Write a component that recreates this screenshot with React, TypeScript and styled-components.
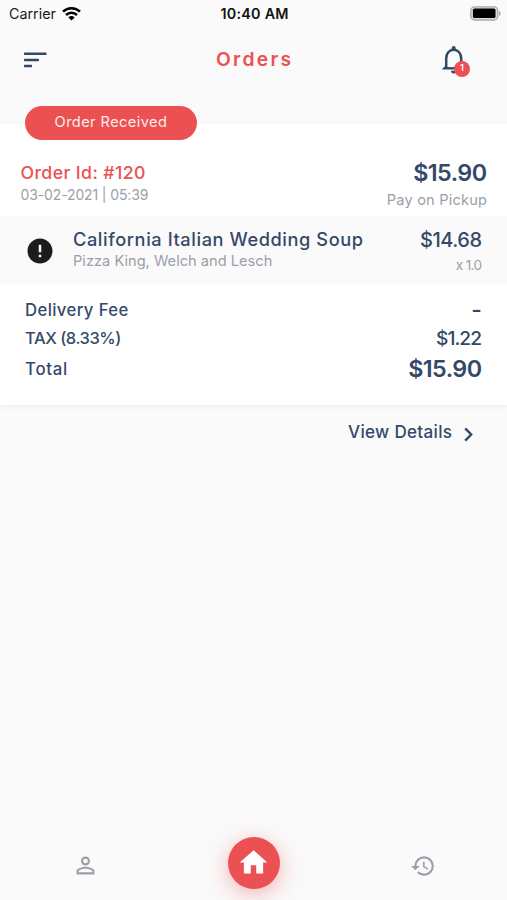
import React from "react";
import styled, { createGlobalStyle } from "styled-components";
import { MdHome, MdHistory, MdPersonOutline, MdError } from "react-icons/md";

const red = "#eb5153";
const navy = "#344968";
const gray = "#9b9fa9";

const GlobalStyle = createGlobalStyle`
  * { box-sizing: border-box; }
  body { margin: 0; background: #fafafa; }
`;

const Screen = styled.div`
  width: 507px;
  height: 900px;
  overflow: hidden;
  display: flex;
  flex-direction: column;
  background: #fafafa;
  color: ${navy};
  font-family: Inter, "Liberation Sans", sans-serif;
`;

const Text = styled.div<{
  $size: number;
  $line: number;
  $weight?: number;
  $color?: string;
  $track?: number;
  $top?: number;
}>`
  font-size: ${(p) => p.$size}px;
  line-height: ${(p) => p.$line}px;
  font-weight: ${(p) => p.$weight ?? 500};
  color: ${(p) => p.$color ?? navy};
  letter-spacing: ${(p) => p.$track ?? 0}px;
  margin-right: ${(p) => -(p.$track ?? 0)}px;
  margin-top: ${(p) => p.$top ?? 0}px;
  white-space: nowrap;
`;

const StatusBar = styled.div`
  height: 27px;
  flex: none;
  display: grid;
  grid-template-columns: 1fr auto 1fr;
  align-items: center;
  padding: 0 6px 0 9px;
`;

const Carrier = styled.div`
  display: flex;
  align-items: center;
  gap: 6px;
`;

const Clock = styled(Text)`
  padding-right: 1px;
`;

const BatteryIcon = styled.svg`
  justify-self: end;
`;

const Header = styled.header`
  height: 65px;
  flex: none;
  display: grid;
  grid-template-columns: 1fr auto 1fr;
  align-items: center;
  padding: 0 36px 0 24px;
`;

const Title = styled(Text)`
  padding: 0 0 2px 12px;
`;

const Bell = styled.div`
  position: relative;
  justify-self: end;
  width: 29.5px;
  height: 30px;
`;

const Badge = styled.span`
  position: absolute;
  left: 12.5px;
  top: 16px;
  width: 16px;
  height: 16px;
  border-radius: 50%;
  background: ${red};
  color: #fff;
  font-size: 9.5px;
  font-weight: 500;
  line-height: 14px;
  text-align: center;
`;

const Card = styled.section`
  margin-top: 32px;
  height: 281px;
  flex: none;
  background: #fff;
  box-shadow: 0 2px 5px rgba(52, 73, 104, 0.06);
`;

const StatusPill = styled.div`
  position: relative;
  top: -18px;
  margin-left: 25px;
  margin-bottom: -18px;
  width: 171.5px;
  height: 34px;
  border-radius: 17px;
  background: ${red};
  display: flex;
  justify-content: center;
  padding-top: 5.6px;
`;

const Summary = styled.div`
  height: 76px;
  display: flex;
  justify-content: space-between;
  padding: 0 20px 0 20.5px;
`;

const Column = styled.div<{ $top?: number; $end?: boolean; $grow?: boolean }>`
  display: flex;
  flex-direction: column;
  align-items: ${(p) => (p.$end ? "flex-end" : "flex-start")};
  padding-top: ${(p) => p.$top ?? 0}px;
  flex: ${(p) => (p.$grow ? "1" : "none")};
`;

const Item = styled.div`
  height: 68px;
  display: flex;
  background: #fafafa;
  padding: 0 25px;
`;

const ItemIcon = styled.div`
  width: 48px;
  padding-top: 20px;
  color: #1c1c1e;
  svg { display: block; }
`;

const Totals = styled.div`
  padding: 11px 25px 0;
`;

const TotalRow = styled.div<{ $height: number }>`
  height: ${(p) => p.$height}px;
  display: flex;
  align-items: center;
  justify-content: space-between;
`;

const DetailsLink = styled.div`
  display: flex;
  align-items: center;
  justify-content: flex-end;
  gap: 12px;
  padding: 16px 34px 0 0;
`;

const Chevron = styled.svg`
  margin-top: 4px;
`;

const BottomNav = styled.nav`
  margin-top: auto;
  height: 75px;
  flex: none;
  display: grid;
  grid-template-columns: 1fr 1fr 1fr;
  justify-items: center;
  align-items: center;
  color: ${gray};
`;

const NavIcon = styled.div`
  padding: 6px 0 0 1px;
  svg { display: block; }
`;

const HomeButton = styled.div`
  width: 52px;
  height: 52px;
  border-radius: 50%;
  background: ${red};
  color: #fff;
  display: flex;
  align-items: center;
  justify-content: center;
  box-shadow: 0 6px 26px rgba(235, 81, 83, 0.3), 0 3px 13px rgba(235, 81, 83, 0.15);
`;

export default function App() {
  return (
    <>
      <GlobalStyle />
      <Screen>
        <StatusBar>
          <Carrier>
            <Text $size={14.3} $line={20} $weight={400} $color="#1a1a1a">Carrier</Text>
            <svg width="19" height="14" viewBox="0 0 19 14" fill="none" stroke="#000" strokeWidth="2.5">
              <path d="M1 4.7a12.2 12.2 0 0 1 17 0" />
              <path d="M4 8a8 8 0 0 1 11 0" />
              <path d="M9.5 13.6 6.4 10.4a4.4 4.4 0 0 1 6.2 0z" fill="#000" stroke="none" />
            </svg>
          </Carrier>
          <Clock $size={14.3} $line={20} $weight={600} $color="#111" $track={0.27}>10:40 AM</Clock>
          <BatteryIcon width="31" height="15" viewBox="0 0 31 15">
            <rect x="0.8" y="0.8" width="27" height="13.2" rx="3.8" fill="#ddd" stroke="#aaa" strokeWidth="1.3" />
            <rect x="2.9" y="2.6" width="22.6" height="9.4" rx="1.6" fill="#000" />
            <path d="M29 5v5q1.8-1 1.8-2.5T29 5z" fill="#aaa" />
          </BatteryIcon>
        </StatusBar>

        <Header>
          <svg width="23" height="16" viewBox="0 0 23 16" fill={navy}>
            <rect x="0" y="0.6" width="22.5" height="2.5" rx="0.6" />
            <rect x="0" y="6.7" width="15" height="2.5" rx="0.6" />
            <rect x="0" y="12.8" width="8" height="2.5" rx="0.6" />
          </svg>
          <Title $size={19.3} $line={24} $weight={600} $color={red} $track={2.25}>Orders</Title>
          <Bell>
            <svg width="24" height="30" viewBox="0 0 24 30" fill="none" stroke={navy}>
              <path d="M4.2 22.5V13.5C4.2 8.6 7.2 4.7 11.7 4.7s7.5 3.9 7.5 8.8v9" strokeWidth="2.5" />
              <path d="M0.4 24.4v-1l3-2.3h16.6l3 2.3v1z" fill={navy} stroke="none" />
              <path d="M11.7 1a2 2 0 0 1 2 2v2h-4v-2a2 2 0 0 1 2-2zM9 25.7h5.4a2.7 2.7 0 0 1-5.4 0z" fill={navy} stroke="none" />
              <path d="M5.5 21.5h12.4" stroke="#fafafa" strokeWidth="1.2" />
            </svg>
            <Badge>1</Badge>
          </Bell>
        </Header>

        <Card>
          <StatusPill>
            <Text $size={14.6} $line={20} $weight={400} $color="#ffeceb" $track={0.42}>Order Received</Text>
          </StatusPill>
          <Summary>
            <Column $top={22}>
              <Text $size={17.7} $line={22} $color={red} $track={0.4}>Order Id: #120</Text>
              <Text $size={14} $line={20} $weight={400} $color={gray} $track={-0.13} $top={1.3}>03-02-2021 | 05:39</Text>
            </Column>
            <Column $top={18} $end>
              <Text $size={23.3} $line={30} $weight={600} $track={-0.55}>$15.90</Text>
              <Text $size={14.6} $line={20} $weight={400} $color={gray} $track={0.2} $top={1.8}>Pay on Pickup</Text>
            </Column>
          </Summary>
          <Item>
            <ItemIcon><MdError size={30} /></ItemIcon>
            <Column $top={11.7} $grow>
              <Text $size={18.2} $line={22} $track={0.59}>California Italian Wedding Soup</Text>
              <Text $size={14.6} $line={20} $weight={400} $color={gray} $track={0.02} $top={1}>Pizza King, Welch and Lesch</Text>
            </Column>
            <Column $top={12} $end>
              <Text $size={20} $line={24} $track={-0.5}>$14.68</Text>
              <Text $size={13.6} $line={20} $weight={400} $color={gray} $track={-0.65} $top={3}>x 1.0</Text>
            </Column>
          </Item>
          <Totals>
            <TotalRow $height={30}>
              <Text $size={16.7} $line={22} $track={0.4}>Delivery Fee</Text>
              <Text $size={23} $line={22}>-</Text>
            </TotalRow>
            <TotalRow $height={26}>
              <Text $size={16.5} $line={22} $track={-0.45}>TAX (8.33%)</Text>
              <Text $size={19.2} $line={24} $track={-0.95}>$1.22</Text>
            </TotalRow>
            <TotalRow $height={36}>
              <Text $size={16.8} $line={22} $track={0.75}>Total</Text>
              <Text $size={23.3} $line={30} $weight={600} $track={-0.55}>$15.90</Text>
            </TotalRow>
          </Totals>
        </Card>

        <DetailsLink>
          <Text $size={17.1} $line={22} $track={0.3}>View Details</Text>
          <Chevron width="9" height="15" viewBox="0 0 9 15" fill="none" stroke={navy} strokeWidth="2.4">
            <path d="m1.2 1.3 6 6.2-6 6.2" />
          </Chevron>
        </DetailsLink>

        <BottomNav>
          <NavIcon><MdPersonOutline size={27} /></NavIcon>
          <HomeButton><MdHome size={33} /></HomeButton>
          <NavIcon><MdHistory size={26} /></NavIcon>
        </BottomNav>
      </Screen>
    </>
  );
}
